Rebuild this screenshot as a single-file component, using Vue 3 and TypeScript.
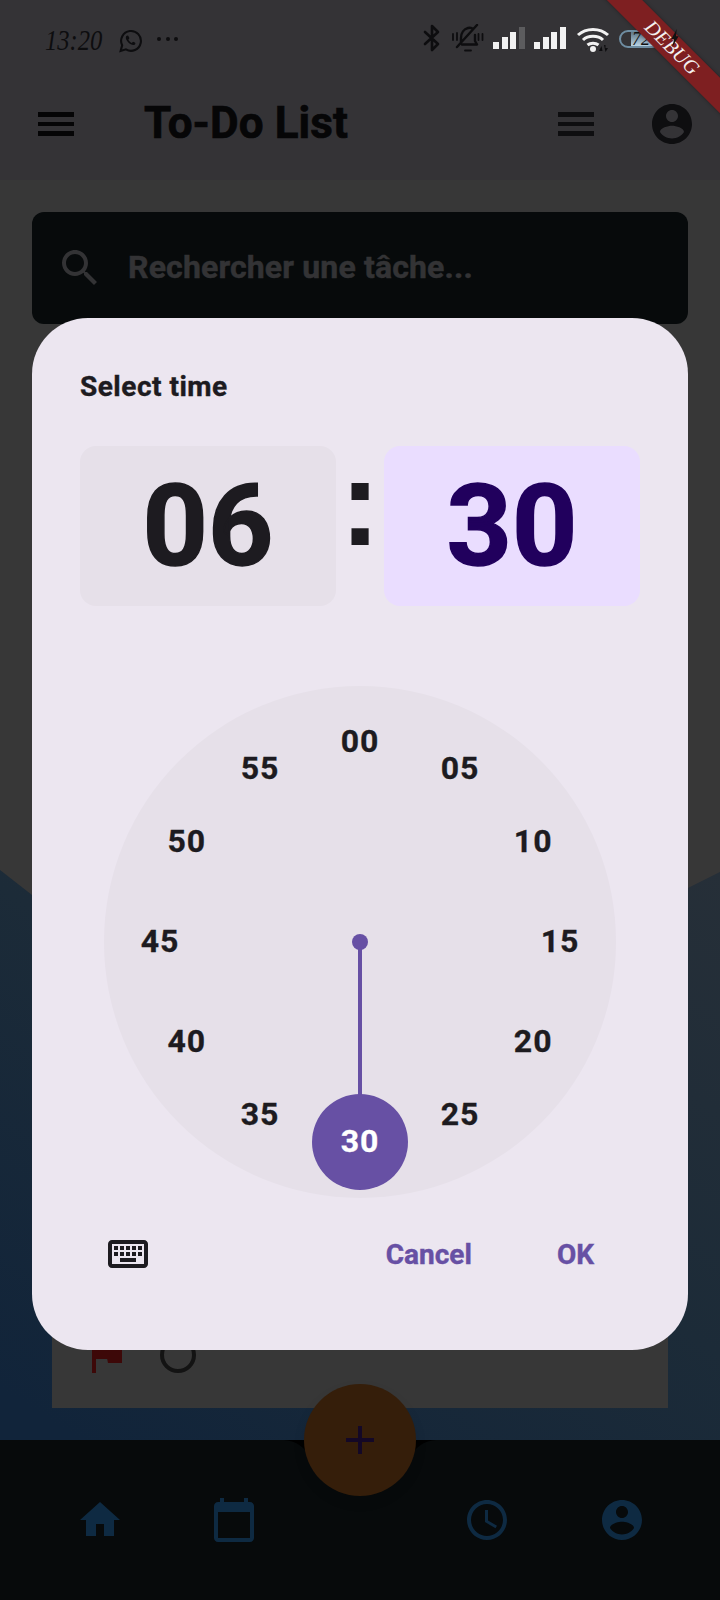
<script setup lang="ts">
interface Tick { label: string; x: number; y: number }
const ticks: Tick[] = ['00','05','10','15','20','25','35','40','45','50','55'].map((label) => {
  const a = (Number(label) / 60) * Math.PI * 2
  return { label, x: 256 + 200 * Math.sin(a), y: 256 - 200 * Math.cos(a) }
})
const bars = [7, 12, 17, 22]
</script>

<template>
  <div class="phone">
    <header class="appbar">
      <div class="status">
        <span class="clock-time">13:20</span>
        <svg class="wa" viewBox="0 0 24 24" width="25" height="25"><path fill="none" stroke="#0d0d0f" stroke-width="2" d="M2.500 22l1.500-5.400A9.500 9.500 0 1 1 7.600 20.500z"/><path fill="#0d0d0f" d="M9 7.200c-.6 0-1.500.8-1.500 2.200 0 2.800 4.200 7 7.200 7 1.300 0 2-.9 2-1.600 0-.5-1.800-1.500-2.200-1.500-.4 0-.9 1-1.300 1-.9 0-3.200-2.300-3.200-3.200 0-.4.9-.8.9-1.300 0-.4-.8-2.600-1.900-2.600z"/></svg>
        <span class="dots"><i></i><i></i><i></i></span>
        <span class="status-right">
          <svg class="bt" viewBox="0 0 18 28" width="18" height="28"><path fill="none" stroke="#0d0d0f" stroke-width="2.600" stroke-linecap="round" stroke-linejoin="round" d="M2 8l13 12-6 6V2l6 6L2 20"/></svg>
          <svg class="bell" viewBox="0 0 32 28" width="32" height="28"><path fill="none" stroke="#0d0d0f" stroke-width="2.400" stroke-linecap="round" stroke-linejoin="round" d="M25 1L5 23M9 18v-4c0-5 3-9 7-10 2-.5 4 0 5 1M23 11v6l2 3.500H10"/><path fill="none" stroke="#0d0d0f" stroke-width="1.800" stroke-linecap="round" d="M1 10v6M5 9v7M26.500 10v6M30.500 10v6M13 26.500h6"/></svg>
          <span class="signal"><i v-for="(h, i) in bars" :key="i" :class="{ dim: i === 3 }" :style="{ height: h + 'px' }"></i></span>
          <span class="signal"><i v-for="(h, i) in bars" :key="'b' + i" :style="{ height: h + 'px' }"></i></span>
          <svg class="wifi" viewBox="0 0 34 26" width="34" height="26"><path fill="none" stroke="#f2f2f2" stroke-width="3" d="M2 9c8-7.500 22-7.500 30 0M7 14c5-5 15-5 20 0M11.500 19c3-2.500 8-2.500 11 0"/><circle cx="17" cy="23" r="3" fill="#f2f2f2"/><path fill="#0d0d0f" d="M23 25l2.500-5 1 5zM28 19h1.500v3H32l-2.500 4z"/></svg>
          <span class="battery"><span class="battery-fill"></span><span class="battery-num">72</span></span>
        </span>
      </div>
      <div class="toolbar">
        <span class="menu"><i></i><i></i><i></i></span>
        <h1 class="title">To-Do List</h1>
        <span class="menu menu-right"><i></i><i></i><i></i></span>
        <svg class="avatar" viewBox="2 2 20 20" width="40" height="40"><path fill="#0e0e10" d="M12 2C6.480 2 2 6.480 2 12s4.480 10 10 10 10-4.480 10-10S17.520 2 12 2zm0 3c1.660 0 3 1.340 3 3s-1.340 3-3 3-3-1.340-3-3 1.340-3 3-3zm0 14.200c-2.500 0-4.710-1.280-6-3.220.03-1.990 4-3.080 6-3.080 1.990 0 5.970 1.090 6 3.080-1.290 1.940-3.500 3.220-6 3.220z"/></svg>
      </div>
    </header>

    <main class="content">
      <div class="sheet"></div>
      <div class="search">
        <svg viewBox="0 0 24 24" width="48" height="48"><path fill="#333335" d="M15.500 14h-.79l-.28-.27C15.410 12.590 16 11.110 16 9.500 16 5.910 13.090 3 9.500 3S3 5.910 3 9.500 5.910 16 9.500 16c1.610 0 3.090-.59 4.230-1.570l.27.28v.79l5 4.990L20.490 19l-4.990-5zm-6 0C7.010 14 5 11.990 5 9.500S7.010 5 9.500 5 14 7.010 14 9.500 11.990 14 9.500 14z"/></svg>
        <span class="search-text">Rechercher une tâche...</span>
      </div>
      <div class="task">
        <svg viewBox="0 0 24 24" width="48" height="48"><path fill="#3d0808" d="M14.400 6L14 4H5v17h2v-7h5.600l.4 2h7V6z"/></svg>
        <span class="radio"></span>
      </div>
    </main>

    <nav class="bottom">
      <svg viewBox="0 0 24 24" width="48" height="48"><path fill="#0e2a42" d="M10 20v-6h4v6h5v-8h3L12 3 2 12h3v8z"/></svg>
      <svg viewBox="0 0 24 24" width="48" height="48"><path fill="#0e2a42" d="M20 3h-1V1h-2v2H7V1H5v2H4c-1.100 0-2 .9-2 2v16c0 1.100.9 2 2 2h16c1.100 0 2-.9 2-2V5c0-1.100-.9-2-2-2zm0 18H4V8h16v13z"/></svg>
      <span class="nav-gap"></span>
      <svg viewBox="0 0 24 24" width="48" height="48"><path fill="#0e2a42" d="M11.990 2C6.470 2 2 6.480 2 12s4.470 10 9.990 10C17.520 22 22 17.520 22 12S17.520 2 11.990 2zM12 20c-4.420 0-8-3.580-8-8s3.580-8 8-8 8 3.580 8 8-3.580 8-8 8zm.5-13H11v6l5.250 3.150.75-1.230-4.500-2.670z"/></svg>
      <svg viewBox="0 0 24 24" width="48" height="48"><path fill="#0e2a42" d="M12 2C6.480 2 2 6.480 2 12s4.480 10 10 10 10-4.480 10-10S17.520 2 12 2zm0 3c1.660 0 3 1.340 3 3s-1.340 3-3 3-3-1.340-3-3 1.340-3 3-3zm0 14.200c-2.500 0-4.710-1.280-6-3.220.03-1.990 4-3.080 6-3.080 1.990 0 5.970 1.090 6 3.080-1.290 1.940-3.500 3.220-6 3.220z"/></svg>
    </nav>

    <svg class="notch notch-left" viewBox="0 0 24 14" width="24" height="14"><path fill="#000" d="M0 0h24v14C18 5 10 .5 0 0z"/></svg>
    <svg class="notch notch-right" viewBox="0 0 24 14" width="24" height="14"><path fill="#000" d="M24 0H0v14C6 5 14 .5 24 0z"/></svg>
    <button class="fab" type="button">
      <svg viewBox="0 0 28 28" width="28" height="28"><path fill="#140826" d="M12 0h4v12h12v4H16v12h-4V16H0v-4h12z"/></svg>
    </button>

    <section class="dialog">
      <h2 class="dialog-title">Select time</h2>
      <div class="time-row">
        <div class="time-box hour">06</div>
        <div class="colon">:</div>
        <div class="time-box minute">30</div>
      </div>
      <div class="dial">
        <span v-for="t in ticks" :key="t.label" class="tick" :style="{ left: t.x + 'px', top: t.y + 'px' }">{{ t.label }}</span>
        <span class="hand"></span>
        <span class="pivot"></span>
        <span class="picked">30</span>
      </div>
      <div class="actions">
        <svg class="kbd" viewBox="0 0 24 24" width="48" height="48"><path fill="#1d1b20" d="M20 7v10H4V7h16m0-2H4c-1.100 0-1.990.9-1.990 2L2 17c0 1.100.9 2 2 2h16c1.100 0 2-.9 2-2V7c0-1.100-.9-2-2-2zm-9 3h2v2h-2zm0 3h2v2h-2zM8 8h2v2H8zm0 3h2v2H8zm-3 0h2v2H5zm0-3h2v2H5zm3 6h8v2H8zm6-3h2v2h-2zm0-3h2v2h-2zm3 3h2v2h-2zm0-3h2v2h-2z"/></svg>
        <span class="btn cancel">Cancel</span>
        <span class="btn ok">OK</span>
      </div>
    </section>

    <div class="ribbon">DEBUG</div>
    <svg class="bolt" viewBox="0 0 10 20" width="10" height="18"><path fill="#111" d="M7 0L1 11h3l-2 9 7-12H6z"/></svg>
  </div>
</template>

<style>
html, body { margin: 0; background: #070a0b; }
</style>

<style scoped>
.phone {
  position: relative;
  width: 720px;
  height: 1600px;
  overflow: hidden;
  display: flex;
  flex-direction: column;
  font-family: Roboto, "Liberation Sans", sans-serif;
  background: #070a0b;
}
.appbar { height: 180px; background: #343336; flex: none; position: relative; z-index: 1; }
.status { height: 80px; display: flex; align-items: center; padding: 0 0 0 45px; box-sizing: border-box; }
.clock-time { display: inline-block; font: italic 30px "Liberation Serif", serif; color: #0d0d0f; width: 60px; transform: scaleX(0.82); transform-origin: left center; margin-right: 13px; }
.wa { flex: none; }
.dots { display: flex; gap: 4.500px; margin-left: 14px; margin-bottom: 2px; }
.dots i { width: 4px; height: 4px; border-radius: 50%; background: #0d0d0f; }
.status-right { position: absolute; left: 423px; top: 24px; display: flex; align-items: flex-start; }
.bell { margin-left: 11px; margin-top: 0; }
.signal { display: flex; align-items: flex-end; gap: 2.600px; height: 22px; width: 32px; margin-left: 9px; margin-top: 3px; }
.signal i { width: 6px; background: #f2f2f2; display: block; }
.signal i.dim { background: #5c5c5e; }
.wifi { margin-left: 10px; margin-top: 2px; }
.battery { position: relative; width: 42px; height: 18px; border: 2px solid #6f8ea3; border-radius: 9px; box-sizing: border-box; overflow: hidden; margin-left: 9px; margin-top: 6px; }
.battery-fill { position: absolute; left: 10px; top: 0; bottom: 0; right: 2px; background: linear-gradient(#5d7586, #b9d3e4); }
.battery-num { position: absolute; left: 11px; top: -3px; font: italic 18px "Liberation Serif", serif; color: #111; }
.bolt { position: absolute; left: 670px; top: 29px; z-index: 4; }
.toolbar { height: 100px; display: flex; align-items: center; padding-left: 38px; box-sizing: border-box; margin-top: -6px; }
.menu { display: flex; flex-direction: column; gap: 5px; width: 36px; flex: none; }
.menu i { height: 4.700px; background: #050506; display: block; }
.menu-right i { background: #0e0e10; }
.title { margin: 0 auto 2px 70px; font-size: 44px; font-weight: 700; line-height: 52px; color: #060607; letter-spacing: 0.1px; -webkit-text-stroke: 0.7px #060607; }
.avatar { margin-left: 58px; margin-right: 28px; }

.content {
  flex: none;
  position: relative;
  height: 1260px;
  display: flex;
  flex-direction: column;
  background: linear-gradient(213deg, #262f38 40%, #1c2b38 68%, #11243a 97%);
}
.sheet {
  position: absolute;
  inset: 0;
  background: #373737;
  clip-path: polygon(0 0, 100% 0, 100% 692px, 688px 708px, 360px 960px, 32px 715px, 0 690px);
}
.search {
  position: relative;
  margin: 32px 32px 0;
  height: 112px;
  background: #070a0b;
  border-radius: 12px;
  display: flex;
  align-items: center;
  padding-left: 24px;
}
.search-text { margin: 0 0 2px 24px; font-size: 32px; font-weight: 700; color: #333335; letter-spacing: 0.15px; -webkit-text-stroke: 0.5px #333335; }
.task {
  position: relative;
  margin: auto 52px 32px;
  height: 110px;
  background: #373737;
  display: flex;
  align-items: center;
  padding: 4px 0 0 30px;
  box-sizing: border-box;
}
.radio { width: 36px; height: 36px; box-sizing: border-box; border: 4px solid #131313; border-radius: 50%; margin-left: 30px; }
.bottom {
  flex: 1;
  position: relative;
  background: #070a0b;
  display: flex;
  align-items: flex-start;
  padding: 56px 0 0 76px;
}
.bottom svg { flex: none; }
.bottom svg:nth-child(2) { margin-left: 86px; }
.nav-gap { width: 205px; flex: none; }
.bottom svg:last-child { margin-left: 87px; }
.fab {
  position: absolute;
  left: 304px;
  top: 1384px;
  width: 112px;
  height: 112px;
  border: 0;
  padding: 0;
  border-radius: 50%;
  background: #351e0a;
  display: flex;
  align-items: center;
  justify-content: center;
  box-shadow: 0 6px 12px rgba(0, 0, 0, 0.1);
}
.notch { position: absolute; top: 1440px; }
.notch-left { left: 284px; }
.notch-right { left: 412px; }

.dialog {
  position: absolute;
  left: 32px;
  top: 318px;
  width: 656px;
  height: 1032px;
  background: #ece6f0;
  border-radius: 56px;
  padding: 49px 48px 0;
  box-sizing: border-box;
  z-index: 2;
}
.dialog-title { margin: 0 0 39px; font-size: 28px; line-height: 40px; font-weight: 700; color: #1d1b20; letter-spacing: 0.5px; -webkit-text-stroke: 0.4px #1d1b20; }
.time-row { display: flex; height: 160px; margin-bottom: 80px; }
.time-box { flex: 1; border-radius: 16px; font-size: 114px; font-weight: 700; line-height: 160px; text-align: center; }
.hour { background: #e6e0e9; color: #1d1b20; -webkit-text-stroke: 1.5px #1d1b20; }
.minute { background: #eaddff; color: #21005d; -webkit-text-stroke: 1.5px #21005d; }
.colon { width: 48px; text-align: center; font-family: "Liberation Sans", sans-serif; font-size: 122px; font-weight: 700; line-height: 114px; color: #1d1b20; }
.dial { position: relative; width: 512px; height: 512px; margin: 0 24px; background: #e6e0e9; border-radius: 50%; }
.tick { position: absolute; transform: translate(-50%, calc(-50% - 1px)); font-size: 32px; font-weight: 700; letter-spacing: 1px; color: #1d1b20; line-height: 40px; -webkit-text-stroke: 0.3px #1d1b20; }
.hand { position: absolute; left: 254px; top: 256px; width: 4px; height: 200px; background: #6750a4; }
.pivot { position: absolute; left: 248px; top: 248px; width: 16px; height: 16px; border-radius: 50%; background: #6750a4; }
.picked { position: absolute; left: 208px; top: 408px; width: 96px; height: 96px; border-radius: 50%; background: #6750a4; color: #fff; font-size: 32px; font-weight: 700; letter-spacing: 1px; line-height: 94px; text-align: center; -webkit-text-stroke: 0.3px #fff; }
.actions { display: flex; align-items: center; height: 48px; margin-top: 32px; padding-left: 24px; }
.btn { font-size: 28px; font-weight: 700; color: #6750a4; -webkit-text-stroke: 0.4px #6750a4; }
.cancel { margin-left: auto; }
.ok { margin-left: 85px; margin-right: 46px; }

.ribbon {
  position: absolute;
  left: 572px;
  top: 35px;
  width: 200px;
  height: 25px;
  transform: rotate(45deg);
  background: #7e1f21;
  box-shadow: 0 0 4px rgba(0, 0, 0, 0.35);
  color: #f4f0f0;
  font: italic 20px/25px "Liberation Serif", serif;
  text-align: center;
  z-index: 3;
}
</style>
